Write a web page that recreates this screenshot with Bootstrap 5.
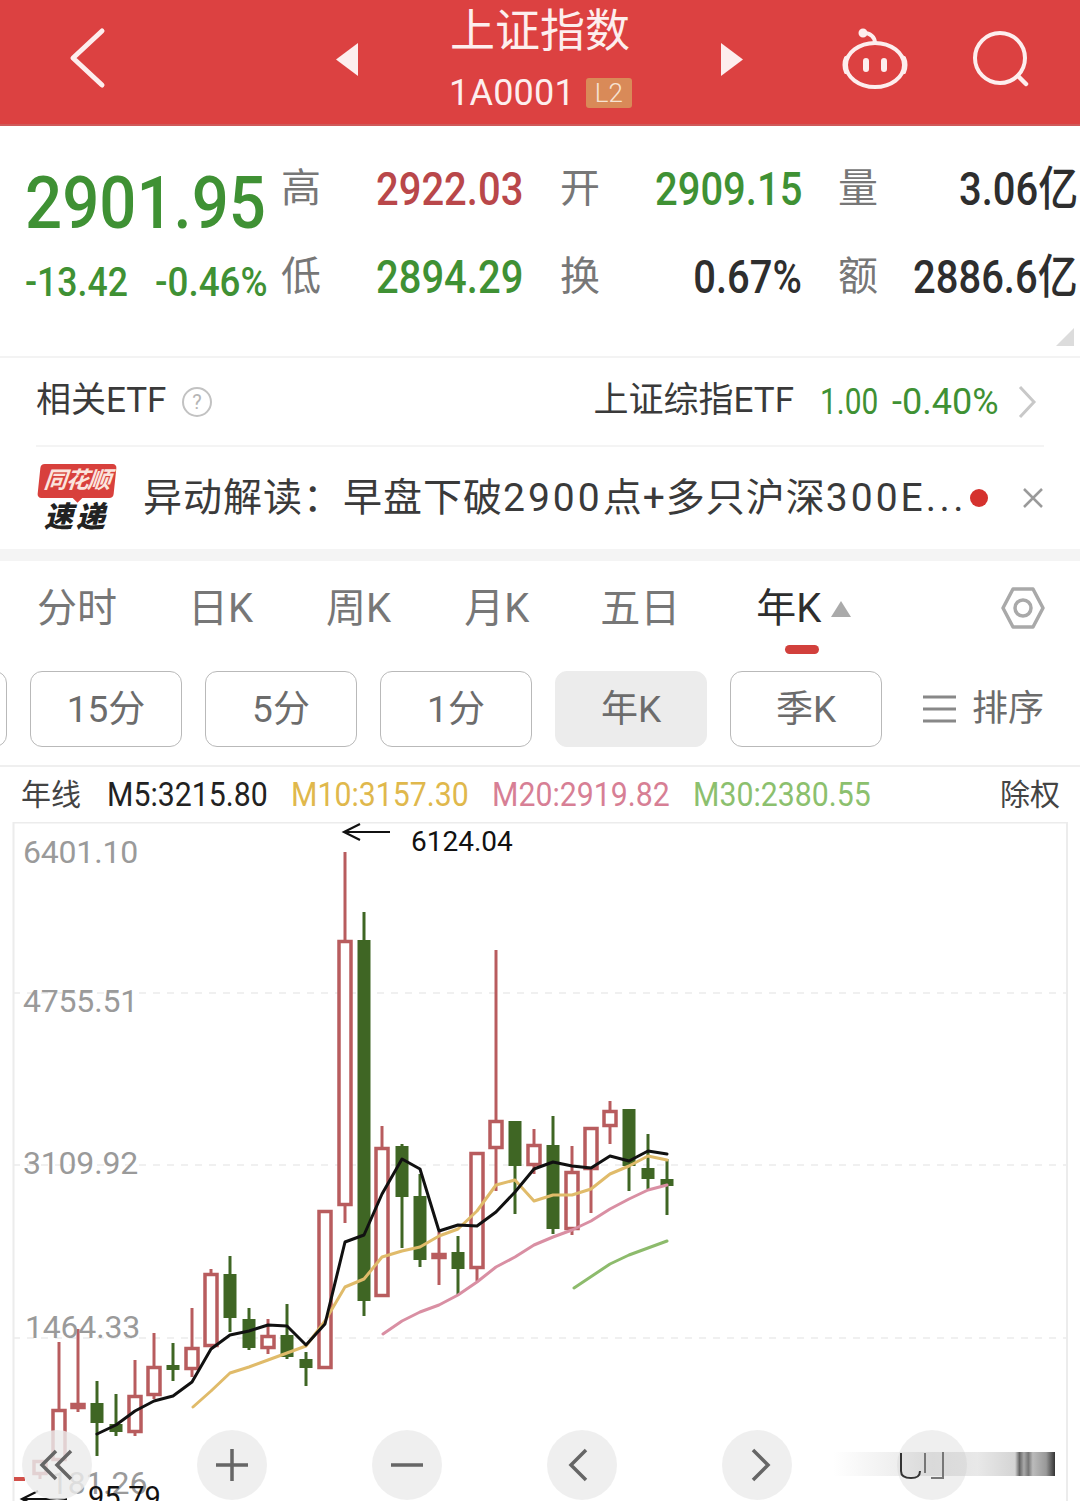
<!DOCTYPE html>
<html lang="zh"><head><meta charset="utf-8"><title>上证指数</title>
<link href="https://cdn.jsdelivr.net/npm/bootstrap@5.3.0/dist/css/bootstrap.min.css" rel="stylesheet">
<style>
:root{--cjk:Roboto,"Noto Sans CJK SC",sans-serif;--up:#b9474a;--dn:#3f9134}
html,body{margin:0;background:#fff}
.phone{width:1080px;height:1502px;overflow:hidden;position:relative;font-family:var(--cjk);color:#333}
.topbar{height:126px;background:#dc4141;color:#fdeeee;border-bottom:2px solid #cf5a5a;position:relative}
.topbar svg{display:block}
.title-box{width:200px;text-align:center}
.title-main{font-size:45px;line-height:52px;font-weight:400;margin-top:6px}
.title-sub{font-size:36px;line-height:40px;font-family:Roboto,sans-serif;font-weight:400;margin-top:15px;letter-spacing:.2px;padding-left:1px}
.l2{background:#d98a58;color:#f7e3d3;font-size:26px;line-height:30px;width:46px;border-radius:3px;font-weight:300;margin-left:11px;text-align:center}
.quote{height:232px;padding:19px 0 0 25px;display:grid;grid-template-columns:256px 40px 202px 77px 202px 76px 200px;grid-auto-rows:88px;align-items:center;position:relative;border-bottom:2px solid #f3f3f3}
.q-lab{font-size:40px;line-height:44px;color:#777;font-weight:400;text-align:right}
.q-val{font-size:47px;line-height:52px;text-align:right;white-space:nowrap;font-weight:500}
.sx{display:inline-block;transform:scaleX(.85);transform-origin:right center}
.q-big{font-size:73px;line-height:80px;font-weight:500;color:#3f9134;padding-top:28px;white-space:nowrap}
.q-big span{display:inline-block;transform:scaleX(.895);transform-origin:left center}
.q-sub{display:flex;justify-content:space-between;font-size:40px;line-height:44px;color:#3f9134;padding-right:15px;padding-top:12px;font-weight:500}
.q-sub span{display:block;white-space:nowrap;transform-origin:left center}
.q-sub .s1{width:103px;transform:scaleX(.89)}.q-sub .s2{width:111px;transform:scaleX(.92)}
.c-up{color:var(--up)}.c-dn{color:var(--dn)}.c-ink{color:#2e2e2e}
.corner{position:absolute;right:6px;bottom:10px;width:18px;height:18px;background:#dcdcdc;clip-path:polygon(100% 0,100% 100%,0 100%)}
.etf{height:89px;margin:0 36px;border-bottom:2px solid #f4f4f4;font-size:35px;font-weight:400;color:#3a3a3a;white-space:nowrap}
.etf-num{font-size:36px;color:var(--dn);display:block;transform-origin:left center}
.en1{width:57px;transform:scaleX(.83);margin-left:26px}.en2{width:106px;transform:scaleX(1);margin-left:15px}
.etf-chev{margin:0 7px 0 19px}
.news{height:102px;padding:0 36px;border-bottom:0}
.band{height:12px;background:#f4f4f4}
.logo-wrap{width:82px;height:72px;position:relative;flex:none}
.logo-bub{position:absolute;left:3px;top:2px;width:76px;height:34px;background:#d8403c;border-radius:4px;transform:skewX(-6deg);color:#fbe4dd;font-size:23px;line-height:34px;font-weight:700;text-align:center;font-style:italic;letter-spacing:-1px}
.logo-tail{position:absolute;left:37px;top:30px;width:9px;height:9px;background:#d8403c;transform:rotate(45deg);z-index:1}
.logo-sub{position:absolute;left:8px;top:38px;width:64px;font-size:29px;line-height:34px;font-weight:900;color:#222;font-style:italic;letter-spacing:3px;white-space:nowrap}
.news-txt{font-size:39px;font-weight:400;color:#3a3a3a;margin-left:25px;white-space:nowrap;letter-spacing:1px;width:822px}
.news-txt i{font-style:normal;letter-spacing:3px}
.news-txt em{font-style:normal;letter-spacing:3.500px}
.rdot{width:18px;height:18px;border-radius:50%;background:#d5322e;flex:none;margin-left:5px}
.tabs{height:98px;padding:0 0 2px 37px;position:relative;font-size:40px;font-weight:400;color:#777}
.tab-dark{color:#2e2e2e;font-weight:400}
.tab-tri{width:0;height:0;border-left:10px solid transparent;border-right:10px solid transparent;border-bottom:16px solid #aaa;margin-left:10px}
.tg1{margin-left:71px}.tg2{margin-left:73px}.tg3{margin-left:73px}.tg4{margin-left:71px}.tg5{margin-left:76px}
.tab-bar{position:absolute;left:785px;top:84px;width:34px;height:9px;border-radius:5px;background:#d2403c}
.tab-gear{position:absolute;left:1001px;top:26px}
.periods{height:108px;padding-top:12px;border-bottom:2px solid #efefef;gap:23px}
.pbtn{width:152px;height:76px;flex:none;border:1px solid #b9b9b9;border-radius:12px;background:#fff;color:#6c6c6c;font-size:37px;font-weight:400;padding:0;line-height:76px;font-family:var(--cjk)}
.pbtn:hover{background:#fff;color:#6c6c6c;border-color:#b9b9b9}
.pbtn.is-on{background:#ececec;border-color:#ececec}
.pedge{margin-left:-145px}
.sort{font-size:36px;color:#6c6c6c;font-weight:400;margin-left:18px;white-space:nowrap;height:76px}
.legend{height:55px;padding:0 20px 0 21px;font-size:34px;line-height:55px;white-space:nowrap}
.legend b{font-weight:400;display:block;transform:scaleX(.89);transform-origin:left center}
.lg-n{font-family:"Noto Sans CJK SC",sans-serif;font-size:30px;font-weight:400;color:#444;line-height:51px}
.lg-1{color:#222;margin-left:26px;width:159px}.lg-2{color:#e0b84c;margin-left:25px;width:176px}.lg-3{color:#d77f95;margin-left:25px;width:176px}.lg-4{color:#8cc06e;margin-left:25px;width:176px}
.canvas-box{display:block}
.axis{font-family:Roboto,sans-serif;font-size:32px;fill:#9a9a9a;letter-spacing:-.2px}
.fbtn{position:absolute;top:1430px;width:70px;height:70px;border-radius:50%;background:rgba(236,236,236,.82);display:flex;align-items:center;justify-content:center}
.fb1{left:22px}.fb2{left:197px}.fb3{left:372px}.fb4{left:547px}.fb5{left:722px}.fb6{left:897px}
.glitch{position:absolute;left:833px;top:1452px;width:222px;height:24px;background:linear-gradient(90deg,rgba(200,200,200,0) 0,rgba(205,205,205,.35) 30%,rgba(200,200,200,.55) 45%,rgba(190,190,190,.35) 65%,rgba(170,170,170,.5) 82%,#666 84%,#aaa 86%,#777 88%,#bbb 90%,#999 96%,#333 100%)}
.glitch-mark{position:absolute;left:895px;top:1448px}
</style></head>
<body>
<div class="phone">
  <header class="topbar d-flex align-items-start">
    <svg class="position-absolute top-0 start-0" width="1080" height="126" fill="none" stroke="#fdeeee" stroke-linecap="round" stroke-linejoin="round">
      <path d="M102 31 73 58l29 27" stroke-width="5"/>
      <path d="M358 43v33l-22-16.500z" fill="#fdeeee" stroke="none"/>
      <path d="M721 43v33l22-16.500z" fill="#fdeeee" stroke="none"/>
      <ellipse cx="875" cy="65" rx="29" ry="22" stroke-width="4"/>
      <path d="M875 43c0-6-5-10-11-10" stroke-width="4"/>
      <circle cx="863" cy="33" r="3.500" fill="#fdeeee" stroke-width="2"/>
      <path d="M866 61v8M884 61v8" stroke-width="6"/>
      <path d="M846 58c-2 4-2 10 0 14M904 58c2 4 2 10 0 14" stroke-width="4"/>
      <circle cx="1000" cy="58" r="25" stroke-width="4"/>
      <path d="M1018 76l8 8" stroke-width="4.500"/>
    </svg>
    <div class="title-box mx-auto">
      <div class="title-main">上证指数</div>
      <div class="title-sub d-flex align-items-center justify-content-center">1A0001<span class="l2">L2</span></div>
    </div>
  </header>

  <section class="quote">
    <div class="q-big"><span>2901.95</span></div>
    <div class="q-lab">高</div><div class="q-val c-up"><span class="sx">2922.03</span></div>
    <div class="q-lab">开</div><div class="q-val c-dn"><span class="sx">2909.15</span></div>
    <div class="q-lab">量</div><div class="q-val c-ink"><span class="sx">3.06亿</span></div>
    <div class="q-sub"><span class="s1">-13.42</span><span class="s2">-0.46%</span></div>
    <div class="q-lab">低</div><div class="q-val c-dn"><span class="sx">2894.29</span></div>
    <div class="q-lab">换</div><div class="q-val c-ink"><span class="sx">0.67%</span></div>
    <div class="q-lab">额</div><div class="q-val c-ink"><span class="sx">2886.6亿</span></div>
    <span class="corner"></span>
  </section>

  <div class="etf d-flex align-items-center">
    <span>相关ETF</span>
    <svg class="ms-3" width="30" height="30" fill="none"><circle cx="15" cy="15" r="14" stroke="#c2c2c2" stroke-width="2"/><text x="15" y="22" font-family="Roboto,sans-serif" font-size="20" fill="#b5b5b5" text-anchor="middle">?</text></svg>
    <span class="ms-auto">上证综指ETF</span>
    <span class="etf-num en1">1.00</span>
    <span class="etf-num en2">-0.40%</span>
    <svg class="etf-chev" width="20" height="34" fill="none" stroke="#c8c8c8" stroke-width="3"><path d="M3 2l14 15L3 32"/></svg>
  </div>

  <div class="news d-flex align-items-center">
    <div class="logo-wrap">
      <span class="logo-tail"></span>
      <span class="logo-bub">同花顺</span>
      <span class="logo-sub">速递</span>
    </div>
    <div class="news-txt">异动解读：早盘下破<i>2900</i>点+多只沪深<i>300E</i><em>...</em></div>
    <span class="rdot"></span>
    <svg class="ms-auto" width="22" height="22" fill="none" stroke="#9a9a9a" stroke-width="2.500"><path d="M2 2l18 18M20 2 2 20"/></svg>
  </div>
  <div class="band"></div>

  <nav class="tabs d-flex align-items-center">
    <span>分时</span><span class="tg1">日K</span><span class="tg2">周K</span><span class="tg3">月K</span><span class="tg4">五日</span>
    <span class="tab-dark tg5">年K</span><span class="tab-tri"></span>
    <span class="tab-bar"></span>
    <svg class="tab-gear" width="44" height="42" fill="none" stroke="#a9a9a9" stroke-width="3.500"><path d="M12 2h20l10 19-10 19H12L2 21z" stroke-linejoin="round"/><circle cx="22" cy="21" r="8"/></svg>
  </nav>

  <div class="periods d-flex align-items-start">
    <button class="btn pbtn pedge" type="button"></button>
    <button class="btn pbtn" type="button">15分</button>
    <button class="btn pbtn" type="button">5分</button>
    <button class="btn pbtn" type="button">1分</button>
    <button class="btn pbtn is-on" type="button">年K</button>
    <button class="btn pbtn" type="button">季K</button>
    <div class="sort d-flex align-items-center">
      <svg width="33" height="30" fill="none" stroke="#888" stroke-width="3"><path d="M0 3h33M0 15h33M0 27h33"/></svg>
      <span class="ms-3">排序</span>
    </div>
  </div>

  <div class="legend d-flex">
    <span class="lg-n">年线</span>
    <b class="lg-1">M5:3215.80</b><b class="lg-2">M10:3157.30</b><b class="lg-3">M20:2919.82</b><b class="lg-4">M30:2380.55</b>
    <span class="lg-n ms-auto">除权</span>
  </div>

  <svg id="kchart" class="canvas-box" width="1080" height="679" viewBox="0 823 1080 679" fill="none">
    <path d="M13.500 1502V823.500H1067V1502" stroke="#ececec" stroke-width="2"/>
    <path d="M13 994h1054M13 1166h1054M13 1339h1054" stroke="#ececec" stroke-width="1.500" stroke-dasharray="7 7"/>
    <g id="kbars"></g>
    <text class="axis" x="23" y="864">6401.10</text>
    <text class="axis" x="23" y="1013">4755.51</text>
    <text class="axis" x="23" y="1175">3109.92</text>
    <text class="axis" x="25" y="1339">1464.33</text>
    <text class="axis" x="50" y="1495">181.26</text>
    <path d="M390 833h-46M360 825l-16 8 16 8" stroke="#111" stroke-width="2.200"/>
    <text x="411" y="852" font-family="Roboto,sans-serif" font-size="28" fill="#111">6124.04</text>
    <path d="M67 1500H22M38 1492l-16 8 16 8" stroke="#111" stroke-width="2.200"/>
    <text x="88" y="1508" font-family="Roboto,sans-serif" font-size="29" fill="#111">95.79</text>
  </svg>

  <div class="fbtn fb1"><svg width="36" height="36" fill="none" stroke="#666" stroke-width="3.500"><path d="M17 4 3 18l14 14M32 4 18 18l14 14"/></svg></div>
  <div class="fbtn fb2"><svg width="34" height="34" fill="none" stroke="#666" stroke-width="3.500"><path d="M17 1v32M1 17h32"/></svg></div>
  <div class="fbtn fb3"><svg width="34" height="34" fill="none" stroke="#666" stroke-width="3.500"><path d="M1 17h32"/></svg></div>
  <div class="fbtn fb4"><svg class="me-2" width="20" height="34" fill="none" stroke="#666" stroke-width="3.500"><path d="M18 2 3 17l15 15"/></svg></div>
  <div class="fbtn fb5"><svg class="ms-2" width="20" height="34" fill="none" stroke="#666" stroke-width="3.500"><path d="M2 2l15 15L2 32"/></svg></div>
  <div class="fbtn fb6"></div>
  <div class="glitch"></div>
  <svg class="glitch-mark" width="70" height="34" fill="none" stroke="#333" stroke-width="2"><path d="M6 5v18c0 6 5 7 10 7s9-1 9-7" /><path d="M30 5v20M48 4v26H36" stroke="#777"/></svg>
</div>
<script>
(function(){
var UP='#b85c5e',DN='#3f6624',NS='http://www.w3.org/2000/svg',g=document.getElementById('kbars');
function add(t,a){var e=document.createElementNS(NS,t);for(var k in a)e.setAttribute(k,a[k]);g.appendChild(e)}
// x, bodyTop, bodyBottom, wickTop, wickBottom, up?
var K=[[40,1461,1476,1461,1480,1],[59,1410,1462,1343,1470,1],[78,1404,1410,1330,1413,1],[97,1404,1424,1382,1457,0],[116,1425,1433,1395,1437,0],[135,1396,1434,1361,1437,1],[154,1367,1397,1334,1400,1],[173,1366,1371,1344,1382,0],[192,1348,1371,1309,1378,1],[211,1274,1348,1270,1348,1],[230,1275,1319,1257,1333,0],[249,1320,1349,1309,1351,0],[268,1336,1350,1320,1355,1],[287,1336,1358,1305,1360,0],[306,1360,1369,1353,1387,0],[325,1211,1370,1211,1370,1],[345,941,1207,853,1224,1],[364,941,1302,913,1317,0],[382,1148,1298,1127,1298,1],[402,1147,1198,1145,1249,0],[420,1197,1261,1175,1268,0],[439,1254,1260,1233,1286,1],[458,1253,1270,1237,1296,0],[477,1153,1270,1153,1282,1],[496,1121,1150,951,1192,1],[515,1122,1167,1122,1215,0],[534,1145,1167,1130,1175,1],[553,1146,1230,1117,1235,0],[572,1172,1231,1147,1236,1],[591,1128,1171,1128,1214,1],[610,1111,1128,1102,1145,1],[629,1110,1167,1110,1192,0],[648,1169,1180,1135,1190,0],[667,1180,1187,1160,1216,0]];
K.forEach(function(c){var x=c[0],col=c[5]?UP:DN;
 add('path',{d:'M'+x+' '+c[3]+'V'+c[4],stroke:col,'stroke-width':3});
 if(c[5])add('rect',{x:x-6,y:c[1]+1.5,width:12,height:Math.max(c[2]-c[1]-3,2),fill:'#fff',stroke:col,'stroke-width':3.5});
 else add('rect',{x:x-6.5,y:c[1],width:13,height:c[2]-c[1],fill:col});
});
add('path',{d:'M14 1480h11',stroke:'#d2504a','stroke-width':4});
function line(p,col,w){add('polyline',{points:p,stroke:col,'stroke-width':w,'stroke-linejoin':'round','stroke-linecap':'round'})}
line('574,1289 610,1265 629,1256 667,1242','#8dbb6c',3);
line('383,1335 402,1322 420,1313 439,1306 458,1296 477,1283 496,1268 515,1258 534,1246 553,1238 572,1231 591,1222 610,1210 629,1200 648,1191 667,1186','#d98fa3',3);
line('193,1408 211,1392 230,1374 249,1368 268,1361 287,1354 306,1347 325,1322 345,1288 364,1280 382,1258 402,1252 420,1248 439,1237 458,1230 477,1212 496,1186 515,1181 534,1202 553,1196 572,1196 591,1190 610,1175 629,1167 648,1157 667,1161','#e0bb6a',3);
line('97,1435 116,1426 135,1412 154,1402 173,1397 192,1383 211,1350 230,1336 249,1332 268,1326 287,1327 306,1346 325,1325 345,1243 364,1236 382,1195 402,1160 420,1170 439,1232 458,1226 477,1227 496,1213 515,1193 534,1170 553,1163 572,1167 591,1169 610,1157 629,1162 648,1152 667,1155','#111',3);
})();
</script>
<script src="https://cdn.jsdelivr.net/npm/bootstrap@5.3.0/dist/js/bootstrap.bundle.min.js"></script>
</body></html>
